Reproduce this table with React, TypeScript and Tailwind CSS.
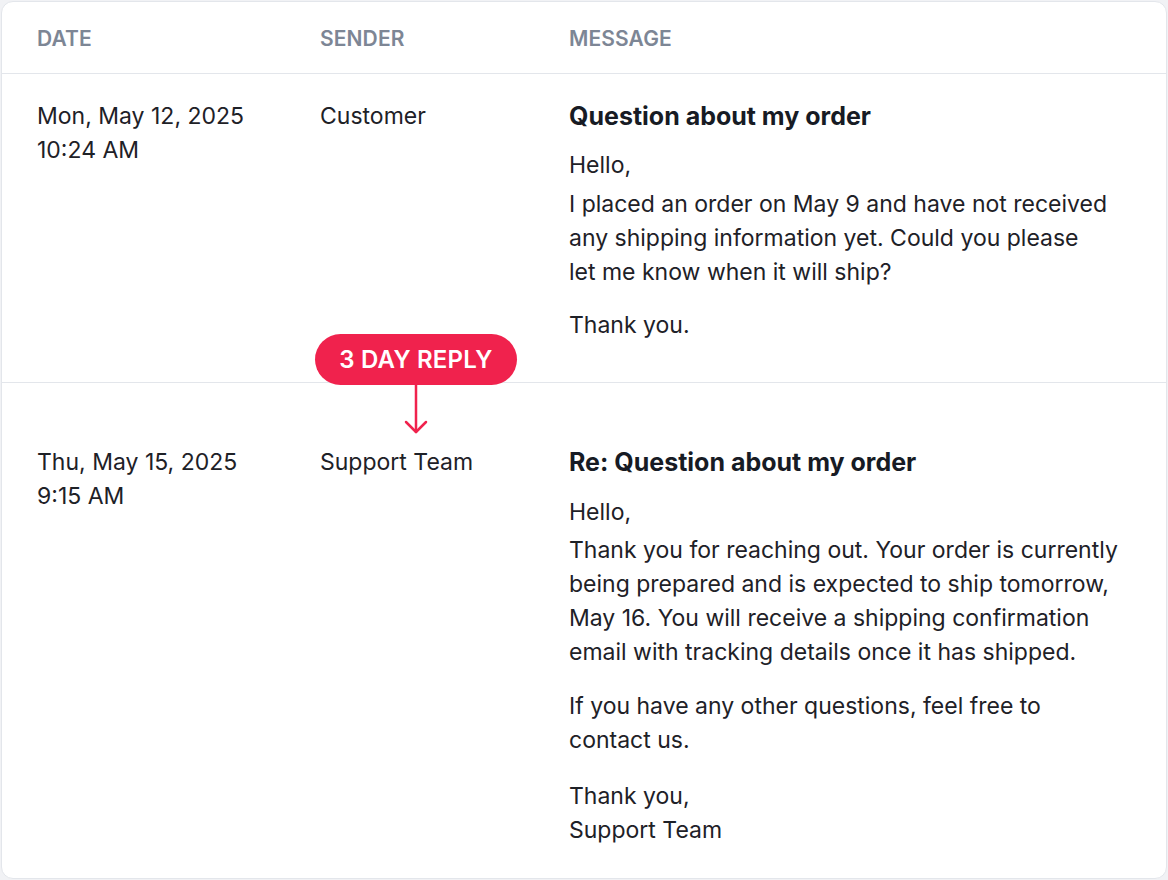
import React from "react";

const font = { fontFamily: "Inter, 'Noto Sans', sans-serif" };

function Line({ children }: { children: React.ReactNode }) {
  return <span className="block whitespace-nowrap">{children}</span>;
}

export default function App() {
  return (
    <div style={font} className="w-[1168px] h-[880px] bg-[#f1f2f5] p-px">
      <div className="relative h-[878px] bg-white rounded-[12px] border border-[#e3e6eb] overflow-hidden text-[#1e2127]">
        {/* header */}
        <div className="flex h-[72px] items-center pt-[3px] border-b border-[#e3e6eb] pl-[35px] text-[21px] font-semibold tracking-[0.1px] text-[#7d8695]">
          <div className="w-[283px]">DATE</div>
          <div className="w-[249px]">SENDER</div>
          <div>MESSAGE</div>
        </div>

        {/* row 1 */}
        <div className="flex pl-[35px] pt-[25px] pb-[40px] border-b border-[#e3e6eb] text-[23px] leading-[34px]">
          <div className="w-[283px]">
            <Line>Mon, May 12, 2025</Line>
            <Line>10:24 AM</Line>
          </div>
          <div className="w-[249px]">Customer</div>
          <div>
            <div className="text-[25px] font-bold text-[#171b24] mb-[15px]">Question about my order</div>
            <div className="mb-[5px]">Hello,</div>
            <div className="mb-[19px]">
              <Line>I placed an order on May 9 and have not received</Line>
              <Line>any shipping information yet. Could you please</Line>
              <Line>let me know when it will ship?</Line>
            </div>
            <div>Thank you.</div>
          </div>
        </div>

        {/* badge */}
        <div className="absolute left-[313px] top-[332px] flex flex-col items-center">
          <div className="h-[51px] w-[202px] rounded-full bg-[#f0224d] flex items-center justify-center text-white text-[24px] font-semibold tracking-[0.2px]">
            3 DAY REPLY
          </div>
          <svg width="26" height="51" viewBox="0 0 26 51" className="-mt-px" fill="none" stroke="#f0224d" strokeWidth="2.5" strokeLinecap="round" strokeLinejoin="round">
            <path d="M13 0 V48" />
            <path d="M3 38 L13 48 L23 38" />
          </svg>
        </div>

        {/* row 2 */}
        <div className="flex pl-[35px] pt-[62px] pb-[30px] text-[23px] leading-[34px]">
          <div className="w-[283px]">
            <Line>Thu, May 15, 2025</Line>
            <Line>9:15 AM</Line>
          </div>
          <div className="w-[249px]">Support Team</div>
          <div>
            <div className="text-[25px] font-bold text-[#171b24] mb-[16px]">Re: Question about my order</div>
            <div className="mb-[4px]">Hello,</div>
            <div className="mb-[20px]">
              <Line>Thank you for reaching out. Your order is currently</Line>
              <Line>being prepared and is expected to ship tomorrow,</Line>
              <Line>May 16. You will receive a shipping confirmation</Line>
              <Line>email with tracking details once it has shipped.</Line>
            </div>
            <div className="mb-[22px]">
              <Line>If you have any other questions, feel free to</Line>
              <Line>contact us.</Line>
            </div>
            <div>
              <Line>Thank you,</Line>
              <Line>Support Team</Line>
            </div>
          </div>
        </div>
      </div>
    </div>
  );
}
